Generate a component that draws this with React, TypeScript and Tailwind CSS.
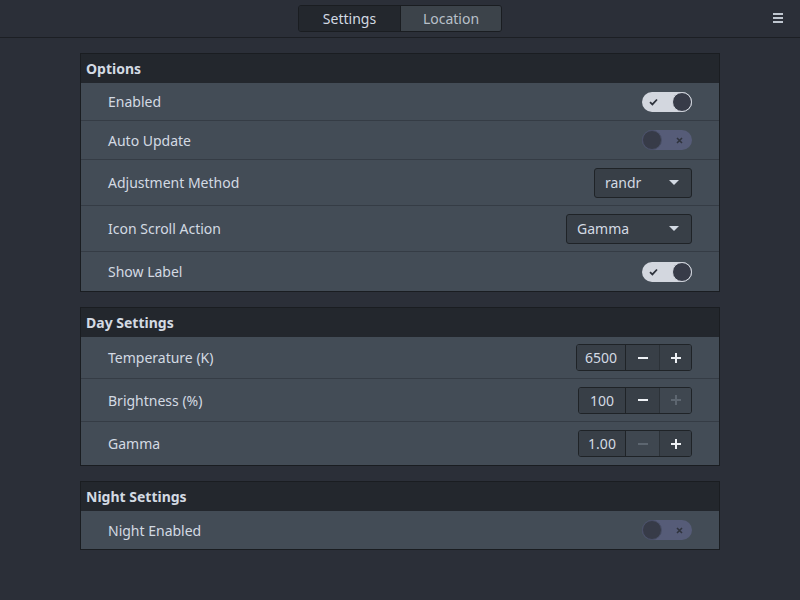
import { useState } from 'react';

type Row =
  | { label: string; kind: 'toggle'; on: boolean }
  | { label: string; kind: 'select'; value: string; width: string }
  | { label: string; kind: 'spin'; value: string; minus: boolean; plus: boolean; valueW: string };

const sections: { title: string; rows: Row[]; heights: string[] }[] = [
  {
    title: 'Options',
    heights: ['h-[38px]', 'h-[39px]', 'h-[46px]', 'h-[46px]', 'h-[39px]'],
    rows: [
      { label: 'Enabled', kind: 'toggle', on: true },
      { label: 'Auto Update', kind: 'toggle', on: false },
      { label: 'Adjustment Method', kind: 'select', value: 'randr', width: 'w-[98px]' },
      { label: 'Icon Scroll Action', kind: 'select', value: 'Gamma', width: 'w-[126px]' },
      { label: 'Show Label', kind: 'toggle', on: true },
    ],
  },
  {
    title: 'Day Settings',
    heights: ['h-[42px]', 'h-[43px]', 'h-[43px]'],
    rows: [
      { label: 'Temperature (K)', kind: 'spin', value: '6500', minus: true, plus: true, valueW: 'w-[49px]' },
      { label: 'Brightness (%)', kind: 'spin', value: '100', minus: true, plus: false, valueW: 'w-[47px]' },
      { label: 'Gamma', kind: 'spin', value: '1.00', minus: false, plus: true, valueW: 'w-[47px]' },
    ],
  },
  {
    title: 'Night Settings',
    heights: ['h-[38px]'],
    rows: [{ label: 'Night Enabled', kind: 'toggle', on: false }],
  },
];

function Toggle({ on }: { on: boolean }) {
  return (
    <div
      className={`relative w-[50px] h-[20px] rounded-full flex items-center ${on ? 'bg-[#d3d7df]' : 'bg-[#565c78]'}`}
    >
      {on ? (
        <>
          <svg className="absolute left-[7px] top-[6px]" width="9" height="8" viewBox="0 0 9 8">
            <path d="M1 4.2 L3.4 6.4 L8 1.5" fill="none" stroke="#2f333d" strokeWidth="1.8" />
          </svg>
          <div className="absolute right-0 top-0 w-[20px] h-[20px] rounded-full bg-[#373b48] border border-[#d3d7df]" />
        </>
      ) : (
        <>
          <div className="absolute left-0 top-0 w-[20px] h-[20px] rounded-full bg-[#373b48] border border-[#4a5068]" />
          <svg className="absolute right-[9px] top-[6.5px]" width="7" height="7" viewBox="0 0 7 7">
            <path d="M1 1 L6 6 M6 1 L1 6" stroke="#2f333d" strokeWidth="1.6" />
          </svg>
        </>
      )}
    </div>
  );
}

function Select({ value, width }: { value: string; width: string }) {
  return (
    <div
      className={`${width} h-[30px] rounded-[3px] border border-[#1f2327] bg-[#383f47] flex items-center justify-between pl-[10px] pr-[12px] text-[14px] text-[#d3dae3]`}
    >
      <span>{value}</span>
      <svg width="10" height="6" viewBox="0 0 10 6">
        <path d="M0 0 L10 0 L5 5 Z" fill="#d3dae3" />
      </svg>
    </div>
  );
}

function Spin({ value, minus, plus, valueW }: { value: string; minus: boolean; plus: boolean; valueW: string }) {
  return (
    <div className="h-[27px] flex rounded-[3px] border border-[#1f2327] overflow-hidden text-[14px]">
      <div className={`${valueW} bg-[#383f47] flex items-center justify-center text-[#d3dae3] border-r border-[#1f2327]`}>
        {value}
      </div>
      <div className={`w-[33px] flex items-center justify-center ${minus ? 'bg-[#383f47]' : 'bg-[#3f4750]'}`}>
        <svg width="12" height="12" viewBox="0 0 12 12">
          <path d="M1 6 L11 6" stroke={minus ? '#eef1f5' : '#5d6670'} strokeWidth="2" />
        </svg>
      </div>
      <div className={`w-[32px] flex items-center justify-center border-l border-[#2c3238] ${plus ? 'bg-[#383f47]' : 'bg-[#3f4750]'}`}>
        <svg width="12" height="12" viewBox="0 0 12 12">
          <path d="M1 6 L11 6 M6 1 L6 11" stroke={plus ? '#eef1f5' : '#5d6670'} strokeWidth="2" />
        </svg>
      </div>
    </div>
  );
}

export default function App() {
  const [tab, setTab] = useState('Settings');

  return (
    <div
      className="w-[800px] h-[600px] bg-[#2b2f38] text-[#d3dae3] overflow-hidden"
      style={{ fontFamily: '"Noto Sans", "Open Sans", sans-serif' }}
    >
      {/* header bar */}
      <div className="relative h-[38px] border-b border-[#1c1f24] flex items-center justify-center">
        <div className="flex h-[27px] rounded-[3px] border border-[#1a1d21] overflow-hidden text-[14px]">
          {['Settings', 'Location'].map((t) => (
            <button
              key={t}
              onClick={() => setTab(t)}
              className={`w-[101px] flex items-center justify-center ${
                tab === t ? 'bg-[#23272d] text-[#d3dae3]' : 'bg-[#3c434a] text-[#b8c0c9] border-l border-[#1a1d21]'
              }`}
            >
              {t}
            </button>
          ))}
        </div>
        <div className="absolute right-[17px] top-[13px] flex flex-col gap-[2px]">
          <div className="w-[10px] h-[2px] bg-[#bfc6cf]" />
          <div className="w-[10px] h-[2px] bg-[#bfc6cf]" />
          <div className="w-[10px] h-[2px] bg-[#bfc6cf]" />
        </div>
      </div>

      <div className="flex flex-col gap-[15px] pt-[15px] px-[80px]">
        {sections.map((s) => (
          <div key={s.title} className="border border-[#1a1d21]">
            <div className="h-[29px] bg-[#23272d] flex items-center pl-[5px] text-[14px] font-bold text-[#d3dae3]">
              {s.title}
            </div>
            {s.rows.map((r, i) => (
              <div
                key={r.label}
                className={`${s.heights[i]} bg-[#434c56] flex items-center justify-between pl-[27px] pr-[27px] text-[14px] ${
                  i < s.rows.length - 1 ? 'border-b border-[#353c45]' : ''
                }`}
              >
                <span>{r.label}</span>
                {r.kind === 'toggle' && <Toggle on={r.on} />}
                {r.kind === 'select' && <Select value={r.value} width={r.width} />}
                {r.kind === 'spin' && <Spin value={r.value} minus={r.minus} plus={r.plus} valueW={r.valueW} />}
              </div>
            ))}
          </div>
        ))}
      </div>
    </div>
  );
}
